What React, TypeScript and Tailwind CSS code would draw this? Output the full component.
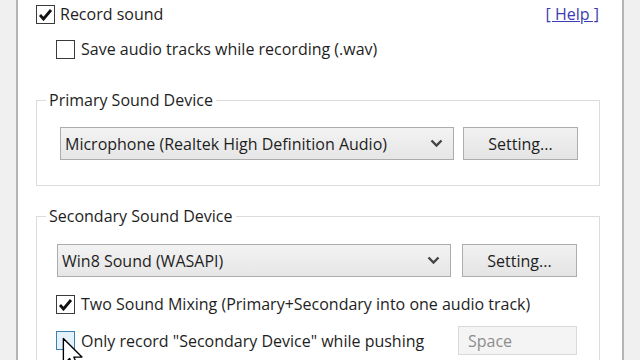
import React from "react";

function CheckBox({ checked, hover }: { checked?: boolean; hover?: boolean }) {
  return (
    <span
      className={
        "flex h-[19px] w-[19px] shrink-0 items-center justify-center border " +
        (hover ? "border-[#3c7fb1] bg-[#e5f1fb]" : "border-[#3a3a3a] bg-white")
      }
    >
      {checked && (
        <svg width="15" height="13" viewBox="0 0 15 13">
          <path d="M2 7 L5.5 11 L13 2" fill="none" stroke="#111" strokeWidth="2.8" strokeLinejoin="miter" />
        </svg>
      )}
    </span>
  );
}

function Chevron() {
  return (
    <svg width="13" height="9" viewBox="0 0 13 9">
      <path d="M1.5 1.5 L6.5 6.5 L11.5 1.5" fill="none" stroke="#444" strokeWidth="2.4" />
    </svg>
  );
}

function DeviceRow({ label, left, btnGap }: { label: string; left: string; btnGap: string }) {
  return (
    <div className={"flex items-center " + left}>
      <div className="flex h-[33px] w-[394px] items-center justify-between border border-[#acacac] bg-gradient-to-b from-[#f3f3f3] to-[#e6e6e6] pl-[4px] pr-[10px]">
        <span>{label}</span>
        <Chevron />
      </div>
      <button
        className={
          "flex h-[33px] w-[115px] items-center justify-center border border-[#adadad] bg-gradient-to-b from-[#f1f1f1] to-[#e4e4e4] " +
          btnGap
        }
      >
        Setting...
      </button>
    </div>
  );
}

function GroupBox({ title, className, children }: { title: string; className: string; children: React.ReactNode }) {
  return (
    <div className={"relative border border-[#dcdcdc] " + className}>
      <span className="absolute -top-[12px] left-[9px] bg-white px-[3px]">{title}</span>
      {children}
    </div>
  );
}

export default function App() {
  return (
    <div
      className="flex h-[360px] w-[640px] overflow-hidden bg-[#f0f0f0] text-[16px] leading-[22px] text-[#1e1e1e]"
      style={{ fontFamily: '"Open Sans", "Noto Sans", sans-serif' }}
    >
      <div className="w-[16px] shrink-0" />
      <div className="relative flex w-[608px] shrink-0 flex-col border-x-2 border-x-[#b4b4b4] bg-white pl-[18px] pr-[22px]">
        {/* top row */}
        <div className="mt-[3px] flex items-center">
          <CheckBox checked />
          <span className="ml-[5px]">Record sound</span>
          <a className="ml-auto mr-[1px] text-[#3b3bb3] underline">[ Help ]</a>
        </div>
        <div className="mt-[13px] flex items-center pl-[20px]">
          <CheckBox />
          <span className="ml-[6px]">Save audio tracks while recording (.wav)</span>
        </div>

        {/* primary */}
        <GroupBox title="Primary Sound Device" className="mt-[40px] h-[86px] shrink-0 pt-[26px]">
          <DeviceRow label="Microphone (Realtek High Definition Audio)" left="pl-[23px]" btnGap="ml-[9px]" />
        </GroupBox>

        {/* secondary */}
        <GroupBox title="Secondary Sound Device" className="mt-[30px] h-[200px] shrink-0 pt-[27px]">
          <DeviceRow label="Win8 Sound (WASAPI)" left="pl-[20px]" btnGap="ml-[11px]" />
          <div className="mt-[16px] flex items-center pl-[19px]">
            <CheckBox checked />
            <span className="ml-[6px]">Two Sound Mixing (Primary+Secondary into one audio track)</span>
          </div>
          <div className="mt-[11px] flex items-center pl-[19px] pr-[22px]">
            <CheckBox hover />
            <span className="ml-[6px]">Only record "Secondary Device" while pushing</span>
            <div className="ml-auto flex h-[29px] w-[119px] items-center border border-[#d9d9d9] bg-[#f4f4f4] pl-[9px] text-[#8c8c8c]">
              Space
            </div>
          </div>
        </GroupBox>

        {/* mouse pointer */}
        <svg className="absolute left-[44px] top-[337px]" width="22" height="36" viewBox="0 0 16 26">
          <path
            d="M1 1 L1 20 L5.5 15.5 L9 23.5 L12 22.2 L8.6 14.5 L14.5 14.5 Z"
            fill="#fff"
            stroke="#000"
            strokeWidth="1"
            strokeLinejoin="round"
          />
        </svg>
      </div>
      <div className="flex-1" />
    </div>
  );
}
